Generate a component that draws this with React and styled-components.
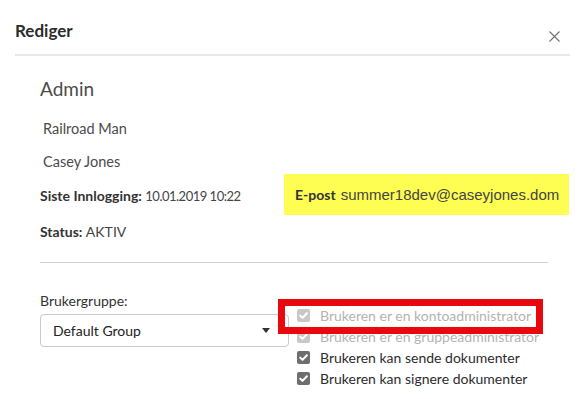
import styled, { createGlobalStyle } from "styled-components";

const GlobalStyle = createGlobalStyle`
  html, body {
    margin: 0;
    padding: 0;
    background: #ffffff;
    overflow: hidden;
  }
  body {
    font-family: Lato, "Noto Sans", sans-serif;
    color: #2c2c2c;
  }
`;

const Dialog = styled.div`
  width: 587px;
  height: 399px;
  box-sizing: border-box;
  padding: 0 17px 0 15px;
`;

const Header = styled.div`
  display: flex;
  align-items: flex-start;
  justify-content: space-between;
  padding: 19px 0 11px;
  border-bottom: 2px solid #e8e8e8;
`;

const Title = styled.h2`
  margin: 0;
  font-size: 17px;
  line-height: 24px;
  font-weight: 700;
  color: #2c2c2c;
`;

const CloseButton = styled.button`
  display: flex;
  margin: 12px 10px 0 0;
  padding: 0;
  border: 0;
  background: none;
  cursor: pointer;
`;

const Body = styled.div`
  padding: 0 22px 0 25px;
`;

const Name = styled.h3`
  margin: 21px 0 11px;
  font-size: 19px;
  line-height: 24px;
  font-weight: 400;
  color: #4b4b4b;
`;

const Line = styled.div`
  padding-left: ${(p) => (p.$indent ? "3px" : "0")};
  margin-top: ${(p) => p.$gap || 0}px;
  font-size: ${(p) => p.$size || 14.5}px;
  line-height: 33px;
  color: #4b4b4b;
`;

const InfoRow = styled.div`
  display: flex;
  align-items: center;
  justify-content: space-between;
  height: 33px;
`;

const Label = styled.span`
  font-size: 14px;
  font-weight: 700;
  color: #333333;
`;

const Value = styled.span`
  font-size: ${(p) => p.$size || 14}px;
  letter-spacing: ${(p) => (p.$tight ? "-0.5px" : "0")};
  color: #444444;
`;

const Highlight = styled.div`
  display: flex;
  align-items: center;
  gap: 5px;
  box-sizing: border-box;
  width: 285px;
  height: 41px;
  margin-right: -21px;
  padding-left: 11px;
  background: #fdfd52;
`;

const Email = styled.span`
  font-family: "Liberation Sans", Arial, sans-serif;
  font-size: 15px;
  color: #454545;
`;

const Divider = styled.hr`
  margin: 14px 0 0;
  border: 0;
  border-top: 1px solid #cfcfcf;
`;

const Settings = styled.div`
  display: flex;
  gap: 8px;
  margin-top: 28px;
`;

const GroupColumn = styled.div`
  flex: 0 0 249px;
`;

const FieldLabel = styled.div`
  font-size: 14px;
  line-height: 20px;
  color: #333333;
`;

const Select = styled.div`
  display: flex;
  align-items: center;
  justify-content: space-between;
  box-sizing: border-box;
  height: 33px;
  margin-top: 3px;
  padding: 0 18px 0 12px;
  border: 1px solid #c9c9c9;
  border-radius: 4px;
  font-size: 14px;
  color: #222222;
`;

const Caret = styled.span`
  width: 0;
  height: 0;
  border-left: 4.5px solid transparent;
  border-right: 4.5px solid transparent;
  border-top: 5px solid #333333;
`;

const CheckList = styled.div`
  position: relative;
  flex-shrink: 0;
  margin-top: 13.5px;
`;

const CheckRow = styled.label`
  display: flex;
  align-items: center;
  gap: 10px;
  height: 21.2px;
  font-size: 14px;
  white-space: nowrap;
  color: ${(p) => (p.$disabled ? "#b3b3b3" : "#2c2c2c")};
`;

const Box = styled.span`
  display: flex;
  align-items: center;
  justify-content: center;
  flex-shrink: 0;
  width: 13px;
  height: 13px;
  border-radius: 2px;
  background: ${(p) => (p.$disabled ? "#c8c8c8" : "#6e6e6e")};
`;

const Marker = styled.div`
  position: absolute;
  left: -19px;
  top: -5.5px;
  width: 265px;
  height: 35px;
  box-sizing: border-box;
  border: 7px solid #e8080d;
  pointer-events: none;
`;

const checks = [
  { text: "Brukeren er en kontoadministrator", disabled: true },
  { text: "Brukeren er en gruppeadministrator", disabled: true },
  { text: "Brukeren kan sende dokumenter" },
  { text: "Brukeren kan signere dokumenter" },
];

function Check({ text, disabled }) {
  return (
    <CheckRow $disabled={disabled}>
      <Box $disabled={disabled}>
        <svg width="11" height="11" viewBox="0 0 11 11">
          <path d="M2.2 5.6 L4.5 7.9 L8.9 3.2" fill="none" stroke="#fff" strokeWidth="2" strokeLinecap="round" strokeLinejoin="round" />
        </svg>
      </Box>
      {text}
    </CheckRow>
  );
}

export default function App() {
  return (
    <>
      <GlobalStyle />
      <Dialog>
        <Header>
          <Title>Rediger</Title>
          <CloseButton aria-label="Lukk">
            <svg width="11" height="11" viewBox="0 0 11 11">
              <path d="M0.5 0.5 L10.5 10.5 M10.5 0.5 L0.5 10.5" stroke="#707070" strokeWidth="1.1" fill="none" />
            </svg>
          </CloseButton>
        </Header>
        <Body>
          <Name>Admin</Name>
          <Line $indent>Railroad Man</Line>
          <Line $indent>Casey Jones</Line>
          <InfoRow>
            <div>
              <Label>Siste Innlogging: </Label>
              <Value $size={13} $tight>10.01.2019 10:22</Value>
            </div>
            <Highlight>
              <Label>E-post</Label>
              <Email>summer18dev@caseyjones.dom</Email>
            </Highlight>
          </InfoRow>
          <Line $gap={4} $size={14}>
            <Label>Status: </Label>
            <Value>AKTIV</Value>
          </Line>
          <Divider />
          <Settings>
            <GroupColumn>
              <FieldLabel>Brukergruppe:</FieldLabel>
              <Select>
                Default Group
                <Caret />
              </Select>
            </GroupColumn>
            <CheckList>
              {checks.map((c) => (
                <Check key={c.text} {...c} />
              ))}
              <Marker />
            </CheckList>
          </Settings>
        </Body>
      </Dialog>
    </>
  );
}
